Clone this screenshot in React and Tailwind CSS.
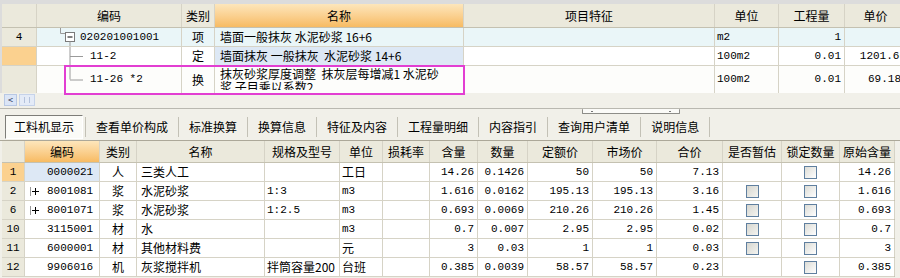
import React from 'react'

const cjk = "font-['Noto_Sans_CJK_SC',sans-serif]"
const mono = "font-['Liberation_Mono','Noto_Sans_CJK_SC',monospace] text-[11px]"

const line = 'border-[#d6d3c6]'
const hdr = 'bg-[#ebe9dc]'
const orange = 'bg-gradient-to-b from-[#fde6bb] to-[#f7bb62]'

const Check = ({ dim }) => (
  <span
    className={`inline-block h-[13px] w-[13px] border border-[#5f7f9f] bg-gradient-to-br ${
      dim ? 'from-[#d6d6d0] to-[#f4f4f0]' : 'from-[#dcdcd6] to-[#ffffff]'
    }`}
  />
)

const TreeTop = () => (
  <svg width="43" height="18" className="shrink-0">
    <path d="M23.5 0 V5.5 H28" stroke="#9a9a9a" fill="none" />
    <rect x="28.5" y="4.5" width="9" height="9" fill="#fff" stroke="#7a7a7a" />
    <path d="M30.5 9 H35.5" stroke="#000" />
    <path d="M33 13.5 V18" stroke="#9a9a9a" />
  </svg>
)

const TreeMid = ({ last, h = 18 }) => (
  <svg width="53" height={h} className="shrink-0">
    <path d={`M33 0 V${last ? h / 2 : h}`} stroke="#9a9a9a" />
    <path d={`M33 ${h / 2 + 0.5} H46`} stroke="#9a9a9a" />
  </svg>
)

const topW = ['w-[35px]', 'w-[145px]', 'w-[33px]', 'w-[249px]', 'w-[251px]', 'w-[64px]', 'w-[66px]', 'w-[62px]']
const topHead = ['', '编码', '类别', '名称', '项目特征', '单位', '工程量', '单价']

const botW = [
  'w-[23px]', 'w-[75px]', 'w-[37px]', 'w-[128px]', 'w-[75px]', 'w-[43px]', 'w-[47px]', 'w-[48px]',
  'w-[50px]', 'w-[65px]', 'w-[64px]', 'w-[66px]', 'w-[59px]', 'w-[58px]', 'w-[55px]',
]
const botHead = ['', '编码', '类别', '名称', '规格及型号', '单位', '损耗率', '含量', '数量', '定额价', '市场价', '合价', '是否暂估', '锁定数量', '原始含量']

const items = [
  { n: '1', code: '0000021', t: '人', name: '三类人工', spec: '', unit: '工日', hl: '14.26', qty: '0.1426', de: '50', mk: '50', tot: '7.13', est: false, orig: '14.26', sel: true },
  { n: '2', code: '8001081', plus: true, t: '浆', name: '水泥砂浆', spec: '1:3', unit: 'm3', hl: '1.616', qty: '0.0162', de: '195.13', mk: '195.13', tot: '3.16', est: true, orig: '1.616' },
  { n: '6', code: '8001071', plus: true, t: '浆', name: '水泥砂浆', spec: '1:2.5', unit: 'm3', hl: '0.693', qty: '0.0069', de: '210.26', mk: '210.26', tot: '1.45', est: true, orig: '0.693' },
  { n: '10', code: '3115001', t: '材', name: '水', spec: '', unit: 'm3', hl: '0.7', qty: '0.007', de: '2.95', mk: '2.95', tot: '0.02', est: true, orig: '0.7' },
  { n: '11', code: '6000001', t: '材', name: '其他材料费', spec: '', unit: '元', hl: '3', qty: '0.03', de: '1', mk: '1', tot: '0.03', est: true, orig: '3' },
  { n: '12', code: '9906016', t: '机', name: '灰浆搅拌机', spec: '拌筒容量200', unit: '台班', hl: '0.385', qty: '0.0039', de: '58.57', mk: '58.57', tot: '0.23', est: false, orig: '0.385' },
]

const tabs = ['查看单价构成', '标准换算', '换算信息', '特征及内容', '工程量明细', '内容指引', '查询用户清单', '说明信息']

export default function App() {
  const cell = `shrink-0 h-full border-r ${line} flex items-center overflow-hidden whitespace-pre`
  return (
    <div className={`relative h-[278px] w-[900px] overflow-hidden bg-[#f1f0e9] text-[12px] text-black ${cjk}`}>
      {/* upper grid */}
      <div className="bg-[#dcdcdc] pl-[2px] pt-[4px]">
        <div className="w-[898px] overflow-hidden bg-white">
          <div className={`flex h-[24px] w-[905px] border-b border-[#c4c1b1] ${hdr}`}>
            {topHead.map((h, i) => (
              <div key={i} className={`${cell} ${topW[i]} justify-center border-[#cac7b8] ${i === 3 ? orange : ''}`}>
                {h}
              </div>
            ))}
          </div>

          <div className={`flex h-[19px] w-[905px] border-b ${line} bg-[#eaf6f8]`}>
            <div className={`${cell} ${topW[0]} ${hdr} justify-center ${mono}`}>4</div>
            <div className={`${cell} ${topW[1]}`}>
              <TreeTop />
              <span className={mono}>020201001001</span>
            </div>
            <div className={`${cell} ${topW[2]} justify-center`}>项</div>
            <div className={`${cell} ${topW[3]} pl-[5px]`}>墙面一般抹灰 水泥砂浆 16+6</div>
            <div className={`${cell} ${topW[4]}`} />
            <div className={`${cell} ${topW[5]} pl-[2px] ${mono}`}>m2</div>
            <div className={`${cell} ${topW[6]} justify-end pr-[3px] ${mono}`}>1</div>
            <div className={`${cell} ${topW[7]}`} />
          </div>

          <div className={`flex h-[19px] w-[905px] border-b ${line}`}>
            <div className={`${cell} ${topW[0]} bg-[#fbd18f]`} />
            <div className={`${cell} ${topW[1]}`}>
              <TreeMid />
              <span className={mono}>11-2</span>
            </div>
            <div className={`${cell} ${topW[2]} justify-center`}>定</div>
            <div className={`${cell} ${topW[3]} pl-[5px] bg-[#dde8f5]`}>墙面抹灰 一般抹灰  水泥砂浆 14+6</div>
            <div className={`${cell} ${topW[4]}`} />
            <div className={`${cell} ${topW[5]} pl-[2px] ${mono}`}>100m2</div>
            <div className={`${cell} ${topW[6]} justify-end pr-[3px] ${mono}`}>0.01</div>
            <div className={`${cell} ${topW[7]} justify-end ${mono}`}>1201.66</div>
          </div>

          <div className="flex h-[27px] w-[905px] bg-[#fdfdfb]">
            <div className={`${cell} ${topW[0]} ${hdr}`} />
            <div className={`${cell} ${topW[1]}`}>
              <TreeMid last h={27} />
              <span className={mono}>11-26 *2</span>
            </div>
            <div className={`${cell} ${topW[2]} justify-center`}>换</div>
            <div className={`shrink-0 h-full border-r ${line} ${topW[3]} pl-[5px] pt-[1px]`}>
              <div className="h-[23px] overflow-hidden leading-[13px]">
                <div className="whitespace-pre">抹灰砂浆厚度调整  抹灰层每增减1 水泥砂</div>
                <div className="whitespace-pre">浆 子目乘以系数2</div>
              </div>
            </div>
            <div className={`${cell} ${topW[4]}`} />
            <div className={`${cell} ${topW[5]} pl-[2px] ${mono}`}>100m2</div>
            <div className={`${cell} ${topW[6]} justify-end pr-[3px] ${mono}`}>0.01</div>
            <div className={`${cell} ${topW[7]} justify-end pr-[5px] ${mono}`}>69.18</div>
          </div>
        </div>
      </div>

      {/* small horizontal scroller */}
      <div className="flex h-[13px] items-center gap-[2px] pl-[4px]">
        <div className="flex h-[12px] w-[13px] items-center justify-center border border-[#b8c8e4] bg-[#dbe5f6] text-[9px] leading-none text-[#1a2a4a]">
          &lt;
        </div>
        <div className="flex h-[12px] w-[16px] items-center justify-center border border-[#c6d3ea] bg-[#e4ebf7]">
          <span className="h-[6px] w-[6px] border-x border-[#b4c2dc]" />
        </div>
      </div>

      {/* splitter */}
      <div className="h-[8px] pt-[2px]">
        <div className="h-[1px] bg-[#b9b8b0]" />
        <div className="ml-[582px] flex h-[5px] w-[98px] items-center justify-between rounded-[1px] border border-t-0 border-[#8d8d88] bg-[#fbfbf8] px-[8px]">
          <span className="h-[1px] w-[2px] bg-[#777]" />
          <span className="h-[1px] w-[2px] bg-[#777]" />
        </div>
      </div>

      {/* tabs */}
      <div className="flex h-[27px] items-center border-b border-[#aca899] pl-[5px]">
        <div className="flex h-[24px] items-center border border-b-white border-r-white border-l-[#7d7d78] border-t-[#7d7d78] bg-[#fbfbf7] px-[8px]">
          工料机显示
        </div>
        <div className="ml-[2px] h-[20px] border-l border-[#c3c1b6]" />
        {tabs.map((t) => (
          <div key={t} className="flex h-[20px] items-center border-r border-[#c3c1b6] px-[10px]">
            {t}
          </div>
        ))}
      </div>

      {/* lower grid */}
      <div className="pl-[2px]">
        <div className="w-[893px] border-r border-[#c4c1b1] bg-white">
          <div className={`flex h-[22px] border-b border-[#c4c1b1] ${hdr}`}>
            {botHead.map((h, i) => (
              <div key={i} className={`${cell} ${botW[i]} justify-center border-[#cac7b8] ${i === 1 ? orange : ''}`}>
                {h}
              </div>
            ))}
          </div>
          {items.map((r) => (
            <div key={r.n} className={`flex h-[19px] border-b ${line}`}>
              <div className={`${cell} ${botW[0]} justify-center ${mono} ${r.sel ? 'bg-[#fbd18f]' : hdr}`}>{r.n}</div>
              <div className={`${cell} ${botW[1]} pl-[5px] ${r.sel ? 'bg-[#dde8f5]' : ''}`}>
                <span className="flex w-[17px] shrink-0 items-center">
                  {r.plus && (
                    <span className="flex h-[9px] w-[9px] items-center justify-center border-l border-[#9a9a9a]">
                      <span className="relative h-[7px] w-[7px]">
                        <span className="absolute left-0 top-[3px] h-[1px] w-[7px] bg-black" />
                        <span className="absolute left-[3px] top-0 h-[7px] w-[1px] bg-black" />
                      </span>
                    </span>
                  )}
                </span>
                <span className={mono}>{r.code}</span>
              </div>
              <div className={`${cell} ${botW[2]} justify-center`}>{r.t}</div>
              <div className={`${cell} ${botW[3]} pl-[4px]`}>{r.name}</div>
              <div className={`${cell} ${botW[4]} pl-[2px] ${r.spec.startsWith('1') ? mono : ''}`}>{r.spec}</div>
              <div className={`${cell} ${botW[5]} pl-[2px] ${r.unit === 'm3' ? mono : ''}`}>{r.unit}</div>
              <div className={`${cell} ${botW[6]}`} />
              <div className={`${cell} ${botW[7]} justify-end pr-[3px] ${mono}`}>{r.hl}</div>
              <div className={`${cell} ${botW[8]} justify-end pr-[3px] ${mono}`}>{r.qty}</div>
              <div className={`${cell} ${botW[9]} justify-end pr-[3px] ${mono}`}>{r.de}</div>
              <div className={`${cell} ${botW[10]} justify-end pr-[3px] ${mono}`}>{r.mk}</div>
              <div className={`${cell} ${botW[11]} justify-end pr-[3px] ${mono}`}>{r.tot}</div>
              <div className={`${cell} ${botW[12]} justify-center`}>{r.est && <Check dim />}</div>
              <div className={`${cell} ${botW[13]} justify-center`}><Check /></div>
              <div className={`${cell} ${botW[14]} justify-end pr-[3px] ${mono}`}>{r.orig}</div>
            </div>
          ))}
        </div>
      </div>

      {/* highlight annotation */}
      <div className="pointer-events-none absolute left-[64px] top-[65px] h-[30px] w-[401px] border-2 border-[#e23ed2]" />
    </div>
  )
}
